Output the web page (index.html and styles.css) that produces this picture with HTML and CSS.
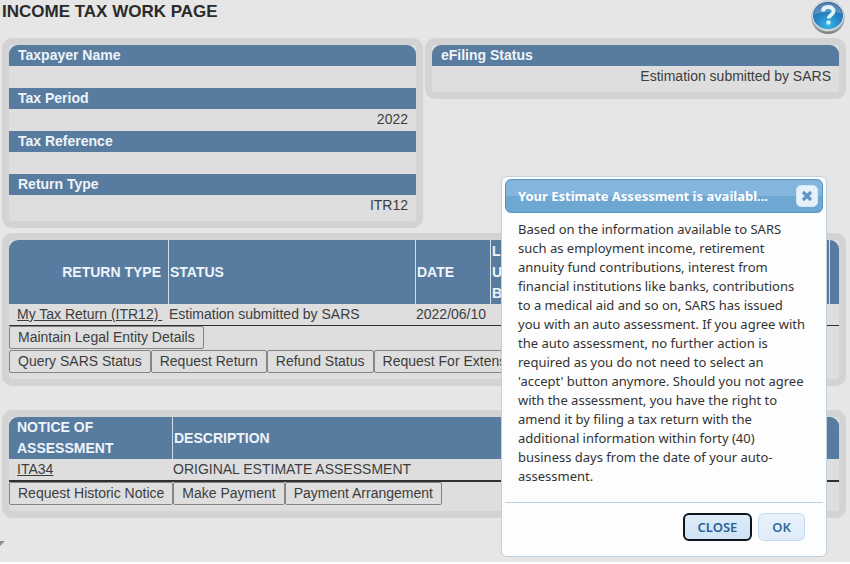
FILE: index.html
```html
<!DOCTYPE html>
<html lang="en">
<head>
<meta charset="utf-8">
<title>Income Tax Work Page</title>
<link rel="stylesheet" href="styles.css">
</head>
<body>
<main class="page">
  <header class="page-header">
    <h1>INCOME TAX WORK PAGE</h1>
    <a class="help" href="#help" aria-label="Help">
      <svg viewBox="0 0 36 36" width="36" height="36" aria-hidden="true">
        <defs>
          <linearGradient id="rim" x1="0" y1="0" x2="0" y2="1">
            <stop offset="0" stop-color="#d8dde0"/>
            <stop offset="0.55" stop-color="#b9c0c5"/>
            <stop offset="1" stop-color="#777c80"/>
          </linearGradient>
          <radialGradient id="glass" cx="0.5" cy="0.85" r="0.8">
            <stop offset="0" stop-color="#35b8e8"/>
            <stop offset="0.5" stop-color="#2687c6"/>
            <stop offset="1" stop-color="#285f9c"/>
          </radialGradient>
        </defs>
        <circle cx="18" cy="17" r="17" fill="url(#rim)"/>
        <circle cx="18" cy="15.5" r="16" fill="#cfd6da"/>
        <ellipse cx="18" cy="15.5" rx="15" ry="13.5" fill="url(#glass)"/>
        <path d="M4 15C5 6 11 3 18 3s13 3 14 11c-8-3-19-3-28 1z" fill="#fff" opacity="0.22"/>
        <path d="M13 11.500c0-3.200 2.200-4.500 5.200-4.500s5.300 1.500 5.300 4.300c0 3.700-4.800 3.600-4.800 7.200" fill="none" stroke="#e4f2fa" stroke-width="3.800"/>
        <circle cx="18.500" cy="22.500" r="2.200" fill="#d5ecf8"/>
      </svg>
    </a>
  </header>

  <div class="summary">
    <dl class="panel">
      <dt>Taxpayer Name</dt><dd></dd>
      <dt>Tax Period</dt><dd>2022</dd>
      <dt>Tax Reference</dt><dd></dd>
      <dt>Return Type</dt><dd>ITR12</dd>
    </dl>
    <dl class="panel">
      <dt>eFiling Status</dt><dd>Estimation submitted by SARS</dd>
    </dl>
  </div>

  <section class="panel returns">
    <table>
      <colgroup><col class="c-type"><col class="c-status"><col class="c-date"><col><col class="c-end"></colgroup>
      <thead>
        <tr><th class="type-head">RETURN TYPE</th><th>STATUS</th><th>DATE</th><th>L<br>U<br>B</th><th></th></tr>
      </thead>
      <tbody>
        <tr><td class="first"><a href="#return">My Tax Return (ITR12)&nbsp;</a></td><td>Estimation submitted by SARS</td><td>2022/06/10</td><td></td><td></td></tr>
      </tbody>
    </table>
    <div class="actions"><button type="button">Maintain Legal Entity Details</button></div>
    <div class="actions">
      <button type="button">Query SARS Status</button>
      <button type="button">Request Return</button>
      <button type="button">Refund Status</button>
      <button type="button">Request For Extension</button>
    </div>
  </section>

  <section class="panel notices">
    <table>
      <colgroup><col class="c-notice"><col></colgroup>
      <thead>
        <tr><th class="first">NOTICE OF ASSESSMENT</th><th>DESCRIPTION</th></tr>
      </thead>
      <tbody>
        <tr><td class="first"><a href="#ita34">ITA34</a></td><td>ORIGINAL ESTIMATE ASSESSMENT</td></tr>
      </tbody>
    </table>
    <div class="actions">
      <button type="button">Request Historic Notice</button>
      <button type="button">Make Payment</button>
      <button type="button">Payment Arrangement</button>
    </div>
  </section>
  <div class="marker"></div>
</main>

<div class="dialog" role="dialog" aria-labelledby="dialog-title">
  <div class="titlebar">
    <h2 id="dialog-title">Your Estimate Assessment is availabl...</h2>
    <button class="close" type="button" aria-label="Close dialog">
      <svg viewBox="0 0 12 12" width="12" height="12" aria-hidden="true"><path d="M2 2l8 8M10 2l-8 8" stroke="#6096c2" stroke-width="3.200"/></svg>
    </button>
  </div>
  <p class="message">Based on the information available to SARS<br>
    such as employment income, retirement<br>
    annuity fund contributions, interest from<br>
    financial institutions like banks, contributions<br>
    to a medical aid and so on, SARS has issued<br>
    you with an auto assessment. If you agree with<br>
    the auto assessment, no further action is<br>
    required as you do not need to select an<br>
    'accept' button anymore. Should you not agree<br>
    with the assessment, you have the right to<br>
    amend it by filing a tax return with the<br>
    additional information within forty (40)<br>
    business days from the date of your auto-<br>
    assessment.</p>
  <div class="dialog-actions">
    <button class="focused" type="button">CLOSE</button>
    <button type="button">OK</button>
  </div>
</div>
</body>
</html>
```
FILE: styles.css
```css
* { box-sizing: border-box; }

body {
  margin: 0;
  background: #fff;
  color: #3d3d3d;
  font: 14px/21px "Liberation Sans", Arial, sans-serif;
}

button { font: inherit; color: inherit; cursor: pointer; }

.page {
  min-height: calc(100vh - 2px);
  padding: 0 4px 0 2px;
  background: #e6e6e6;
}

.page-header {
  display: flex;
  justify-content: space-between;
  align-items: flex-start;
  height: 38px;
}

h1 { margin: 2px 0 0; font-size: 17px; line-height: 20px; color: #2b2b2b; }

.help svg { display: block; }

.panel {
  margin: 0;
  padding: 0 0 6px;
  border: 7px solid #d3d3d3;
  border-radius: 10px;
  background: #dedede;
}

.summary {
  display: grid;
  grid-template-columns: 1fr 1fr;
  align-items: start;
  gap: 2px;
}

.summary .panel { padding-bottom: 4px; }

dt {
  padding: 0 9px;
  background: #587c9f;
  color: #eef4fa;
  font-weight: bold;
}

dt:first-child { border-radius: 9px 9px 0 0; }

dd { height: 22px; margin: 0; padding: 0 8px; text-align: right; }

.returns { margin-top: 5px; }
.notices { margin-top: 24px; }

table { width: 100%; table-layout: fixed; border-collapse: separate; border-spacing: 0; }

th {
  padding: 0 0 0 1px;
  background: #587c9f;
  color: #eef4fa;
  text-align: left;
  vertical-align: middle;
}

.returns th { height: 64px; }

th + th { border-left: 1px solid #d5dde5; }
th:first-child { border-top-left-radius: 9px; }
th:last-child { border-top-right-radius: 9px; }

td { padding: 0 0 0 1px; border-bottom: 1px solid #2f2f2f; white-space: nowrap; }
.notices td { border-bottom-width: 2px; }

th.first, td.first { padding-left: 8px; }
th.type-head { padding-right: 7px; text-align: right; }

td a { color: inherit; }

.c-type { width: 159px; }
.c-status { width: 247px; }
.c-date { width: 75px; }
.c-end { width: 10px; }
.c-notice { width: 163px; }

.actions { display: flex; }
.actions + .actions { padding-top: 1px; }

.actions button {
  padding: 0 8px;
  border: 1px solid #858585;
  border-radius: 2px;
  background: #dedede;
  white-space: nowrap;
}

.marker {
  width: 5px;
  height: 5px;
  margin: 23px 0 0 -2px;
  background: #8c8c8c;
  clip-path: polygon(0 0, 100% 0, 0 100%);
}

.dialog {
  position: absolute;
  top: 176px;
  right: 23px;
  width: 326px;
  padding: 2px 3px 3px;
  border: 1px solid #bfd1df;
  border-radius: 6px;
  background: #fdfdfd;
  color: #333;
  font: 13px/19px "Noto Sans", sans-serif;
}

.titlebar {
  display: flex;
  align-items: center;
  justify-content: space-between;
  height: 34px;
  padding: 0 4px 0 12px;
  border: 1px solid #5794c0;
  border-radius: 6px;
  background: linear-gradient(#84b5dd 0 50%, #6fa7d3 50% 100%);
}

h2 { margin: 0; color: #fff; font-size: 13px; line-height: 19px; white-space: nowrap; }

.close {
  display: grid;
  place-items: center;
  width: 22px;
  height: 22px;
  padding: 0;
  border: 1px solid #d4e6f5;
  border-radius: 5px;
  background: #e5f1fb;
}

.message { margin: 0; padding: 7px 9px 16px 13px; }

.dialog-actions {
  display: flex;
  justify-content: flex-end;
  gap: 6px;
  padding: 10px 18px 12px;
  border-top: 1px solid #bccfdc;
}

.dialog-actions button {
  height: 28px;
  padding: 0 13px;
  border: 1px solid #c5dbec;
  border-radius: 6px;
  background: linear-gradient(#e6f1fb, #dfecf8);
  color: #2e6e9e;
  font-weight: 600;
}

.dialog-actions .focused {
  border: 2px solid #10151c;
  background: linear-gradient(#dcecfa, #cfe3f6);
  color: #2a5f94;
}
```
